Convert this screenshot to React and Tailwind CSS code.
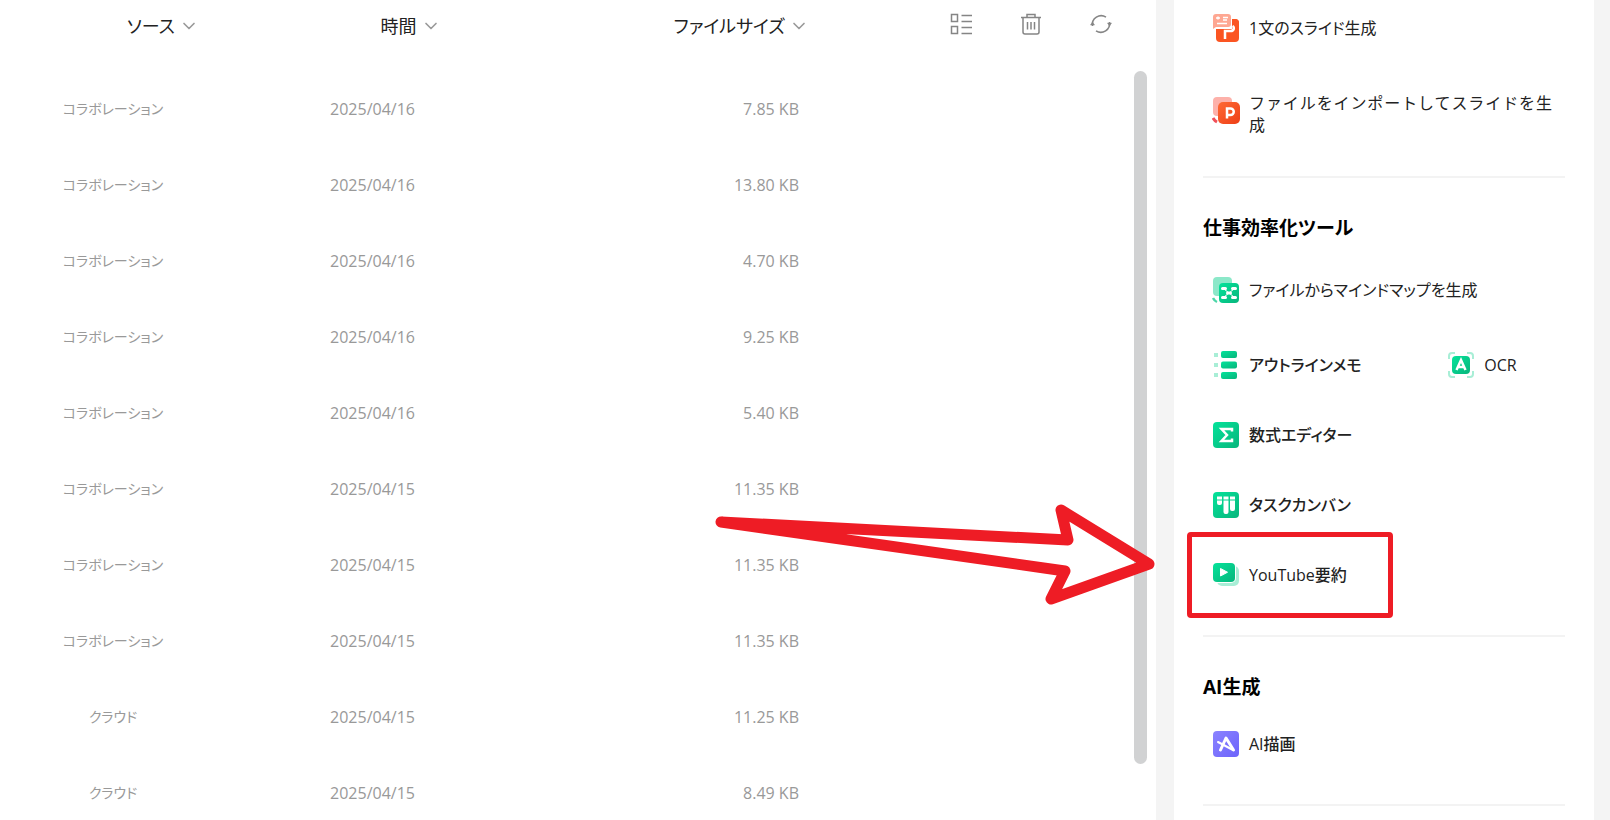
import React from 'react';
import { ChevronDown } from 'lucide-react';

const files = [
  { source: 'コラボレーション', date: '2025/04/16', size: '7.85 KB' },
  { source: 'コラボレーション', date: '2025/04/16', size: '13.80 KB' },
  { source: 'コラボレーション', date: '2025/04/16', size: '4.70 KB' },
  { source: 'コラボレーション', date: '2025/04/16', size: '9.25 KB' },
  { source: 'コラボレーション', date: '2025/04/16', size: '5.40 KB' },
  { source: 'コラボレーション', date: '2025/04/15', size: '11.35 KB' },
  { source: 'コラボレーション', date: '2025/04/15', size: '11.35 KB' },
  { source: 'コラボレーション', date: '2025/04/15', size: '11.35 KB' },
  { source: 'クラウド', date: '2025/04/15', size: '11.25 KB' },
  { source: 'クラウド', date: '2025/04/15', size: '8.49 KB' },
];

const Gradients = () => (
  <svg className="absolute h-0 w-0" aria-hidden="true">
    <defs>
      <linearGradient id="green" x1="0" y1="0" x2="1" y2="1">
        <stop offset="0" stopColor="#04e39a" />
        <stop offset="1" stopColor="#08b57c" />
      </linearGradient>
      <linearGradient id="orange" x1="0" y1="0" x2="1" y2="1">
        <stop offset="0" stopColor="#fe6a35" />
        <stop offset="1" stopColor="#ee3f17" />
      </linearGradient>
      <linearGradient id="purple" x1="0" y1="0" x2="1" y2="1">
        <stop offset="0" stopColor="#8b83ff" />
        <stop offset="1" stopColor="#6c63fb" />
      </linearGradient>
    </defs>
  </svg>
);

const Icon = ({ children }) => (
  <svg className="size-7 shrink-0" viewBox="0 0 28 28" fill="none" aria-hidden="true">
    {children}
  </svg>
);

const SlideIcon = () => (
  <Icon>
    <rect x="4" y="5" width="23" height="23" rx="4" fill="#fb5522" />
    <path d="M0 0h20v15H0z" fill="#fff" />
    <path d="M4 0h12a3 3 0 0 1 3 3v7a3 3 0 0 1-3 3H4l-3 2V3a3 3 0 0 1 3-3Z" fill="#fea792" />
    <path d="M20 5h3a4 4 0 0 1 4 4v7h-7z" fill="#fb5522" />
    <path d="M4 4h4M6 2.500v3M11 3.500h5M11 6h4M5 9.500h10" stroke="#fff" strokeWidth="1.500" />
    <path d="M13 25V17h5.500c4 0 4-4 2-5" stroke="#fff" strokeWidth="2.500" />
  </Icon>
);

const ImportSlideIcon = () => (
  <Icon>
    <rect x="1" y="1" width="19" height="19" rx="4" fill="#fdb1aa" />
    <path d="M1 22c1 2 2 3 4 4" stroke="#f1505a" strokeWidth="3" />
    <rect x="6" y="6" width="22" height="22" rx="5" fill="url(#orange)" />
    <path d="M15 22.500V12.500h3.500a3 3 0 0 1 0 6.500H15" stroke="#fff" strokeWidth="2.500" />
  </Icon>
);

const MindMapIcon = () => (
  <Icon>
    <rect x="1" y="1" width="19" height="19" rx="4" fill="#8ce8c9" />
    <path d="M1 22c1 2 2 3 4 4" stroke="#4dd6a8" strokeWidth="2.500" />
    <rect x="7" y="7" width="20" height="20" rx="4" fill="url(#green)" />
    <path d="M12 13l10 8M22 13l-10 8" stroke="#fff" strokeWidth="1" />
    <path d="M10.500 12.500h3M20.500 12.500h3M10.500 21.500h3M20.500 21.500h3M15.500 17h3" stroke="#fff" strokeWidth="3" strokeLinecap="round" />
  </Icon>
);

const OutlineIcon = () => (
  <Icon>
    <path d="M2 2h4v4H2zM2 12h4v4H2zM2 22h4v4H2z" fill="#a8eed6" />
    <rect x="9" y="0" width="16" height="7" rx="2" fill="url(#green)" />
    <rect x="9" y="10.500" width="16" height="7" rx="2" fill="url(#green)" />
    <rect x="9" y="21" width="16" height="7" rx="2" fill="url(#green)" />
  </Icon>
);

const OcrIcon = () => (
  <Icon>
    <path d="M2 8V5a3 3 0 0 1 3-3h3M20 2h3a3 3 0 0 1 3 3v3M26 20v3a3 3 0 0 1-3 3h-3M8 26H5a3 3 0 0 1-3-3v-3" stroke="#a8eed6" strokeWidth="2" />
    <rect x="5" y="5" width="18" height="18" rx="4" fill="url(#green)" />
    <path d="M9.500 19l4.500-10 4.500 10M11 16h6" stroke="#fff" strokeWidth="2.500" />
  </Icon>
);

const FormulaIcon = () => (
  <Icon>
    <rect x="1" y="1" width="26" height="26" rx="4" fill="url(#green)" />
    <path d="M20 10.500V8H9.500L15 14l-5.500 6H20v-2.500" stroke="#fff" strokeWidth="2.500" />
  </Icon>
);

const KanbanIcon = () => (
  <Icon>
    <rect x="1" y="1" width="26" height="26" rx="4" fill="url(#green)" />
    <path d="M5 5.500h5v3H5zM11.500 5.500h5v3h-5zM18 5.500h5v3h-5zM5 9.500h5V12a2 2 0 0 1-2 2H7a2 2 0 0 1-2-2zM11.500 9.500h5V21a2 2 0 0 1-2 2h-1a2 2 0 0 1-2-2zM18 9.500h5V18a2 2 0 0 1-2 2h-1a2 2 0 0 1-2-2z" fill="#fff" />
  </Icon>
);

const VideoIcon = () => (
  <Icon>
    <rect x="5" y="5" width="22" height="20" rx="5" fill="#a8eed6" />
    <rect x="0" y="1" width="24" height="21" rx="5" fill="#fff" />
    <rect x="1" y="2" width="22" height="19" rx="4" fill="url(#green)" />
    <path d="M8.500 7.500v7.500l7-3.750z" fill="#fff" stroke="#fff" strokeLinejoin="round" />
  </Icon>
);

const DrawIcon = () => (
  <Icon>
    <rect x="1" y="1" width="26" height="26" rx="4" fill="url(#purple)" />
    <path d="M6 12l15 8" stroke="#fff" strokeWidth="2" strokeLinecap="round" />
    <path d="M8.500 20L14 8l7.500 12" stroke="#fff" strokeWidth="3" strokeLinecap="round" strokeLinejoin="round" />
  </Icon>
);

const SortButton = ({ label }) => (
  <button type="button" className="inline-flex items-center gap-1 text-lg leading-7 font-normal text-[#222]">
    {label}
    <ChevronDown className="size-5 text-[#999]" strokeWidth={2} />
  </button>
);

const ToolbarButton = ({ label, children }) => (
  <button type="button" aria-label={label} className="size-6">
    <svg className="size-6" viewBox="0 0 24 24" fill="none" stroke="#858585" strokeWidth="1.500" aria-hidden="true">
      {children}
    </svg>
  </button>
);

const FileTable = () => (
  <table className="w-full table-fixed text-[#999]">
    <colgroup>
      <col className="w-[226px]" />
      <col className="w-[293px]" />
      <col className="w-[290px]" />
      <col />
    </colgroup>
    <thead>
      <tr className="h-[71px] align-top">
        <th className="pt-3 pl-[100px]">
          <SortButton label="ソース" />
        </th>
        <th className="pt-3 pl-[76px]">
          <SortButton label="時間" />
        </th>
        <th className="pt-3 text-right">
          <SortButton label="ファイルサイズ" />
        </th>
        <th className="pt-3 pr-[43px]">
          <div className="flex justify-end gap-[46px]">
            <ToolbarButton label="表示切替">
              <path d="M2.500 2.500h6v7h-6zM2.500 14.500h6v7h-6zM12.500 3.500H23M12.500 9.500H23M12.500 15.500H23M12.500 21.500H23" />
            </ToolbarButton>
            <ToolbarButton label="削除">
              <path d="M2 5.500h20M8 5.500v-3h8v3M4 5.500V20a2 2 0 0 0 2 2h12a2 2 0 0 0 2-2V5.500M8.500 10v7.500M12 10v7.500M15.500 10v7.500" />
            </ToolbarButton>
            <ToolbarButton label="更新">
              <path d="M3.500 14A8.800 8.800 0 0 1 17 5.200M20.500 10A8.800 8.800 0 0 1 7 18.800" />
              <path d="M1.500 13h4l-2-3zM18.500 11h4l-2 3z" fill="#858585" strokeWidth="0.500" />
            </ToolbarButton>
          </div>
        </th>
      </tr>
    </thead>
    <tbody>
      {files.map((file, i) => (
        <tr key={i} className="h-[76px]">
          <td className="text-center text-sm">{file.source}</td>
          <td className="text-center text-base">{file.date}</td>
          <td className="pr-[10px] text-right text-base">{file.size}</td>
          <td />
        </tr>
      ))}
    </tbody>
  </table>
);

const Tool = ({ icon, label, className = 'h-[70px] font-medium' }) => (
  <button type="button" className={`flex items-center gap-[9px] text-left text-base leading-[22px] ${className}`}>
    {icon}
    <span>{label}</span>
  </button>
);

const Section = ({ title, children }) => (
  <section className="border-b-2 border-[#f3f3f3] pt-9 pb-[25px]">
    <h2 className="mb-2 text-[19px] leading-7 font-bold text-black">{title}</h2>
    <div className="pl-[9px]">{children}</div>
  </section>
);

const App = () => {
  return (
    <div className="flex h-screen gap-[18px] overflow-hidden bg-[#f4f4f4] pr-4 font-['Open_Sans','Noto_Sans_CJK_JP',sans-serif] [font-feature-settings:'palt']">
      <Gradients />
      <main className="relative min-w-0 flex-1 bg-white">
        <FileTable />
        <div className="absolute top-[71px] right-[9px] bottom-14 w-[13px] rounded-full bg-[#d1d2d3]" />
        <svg className="absolute top-[500px] right-0 z-10 h-[110px] w-[444px]" viewBox="0 0 444 110" fill="none" aria-hidden="true">
          <path
            d="M9 22L356 40L349 10L437 64L339 99L353 71Z"
            stroke="#ee1c25"
            strokeWidth="11"
            strokeLinejoin="round"
          />
        </svg>
      </main>

      <aside className="w-[420px] shrink-0 bg-white px-[29px] text-[#222]">
        <div className="border-b-2 border-[#f3f3f3] pb-10 pl-[9px]">
          <Tool icon={<SlideIcon />} label="1文のスライド生成" className="h-14" />
          <button type="button" className="mt-9 flex w-full items-start gap-[9px] text-base leading-[22px]">
            <span className="pt-1">
              <ImportSlideIcon />
            </span>
            <span className="w-[303px] text-justify [font-feature-settings:normal]">
              ファイルをインポートしてスライドを生成
            </span>
          </button>
        </div>

        <Section title="仕事効率化ツール">
          <Tool icon={<MindMapIcon />} label="ファイルからマインドマップを生成" className="h-20" />
          <div className="grid grid-cols-3">
            <Tool icon={<OutlineIcon />} label="アウトラインメモ" className="col-span-2 h-[70px] font-medium" />
            <Tool icon={<OcrIcon />} label="OCR" />
          </div>
          <Tool icon={<FormulaIcon />} label="数式エディター" />
          <Tool icon={<KanbanIcon />} label="タスクカンバン" />
          <div className="relative">
            <Tool icon={<VideoIcon />} label="YouTube要約" />
            <div className="pointer-events-none absolute -top-2 -left-[25px] h-[86px] w-[206px] rounded-sm border-[5px] border-[#ee1c25]" />
          </div>
        </Section>

        <Section title="AI生成">
          <Tool icon={<DrawIcon />} label="AI描画" />
        </Section>
      </aside>
    </div>
  );
};

export default App;
